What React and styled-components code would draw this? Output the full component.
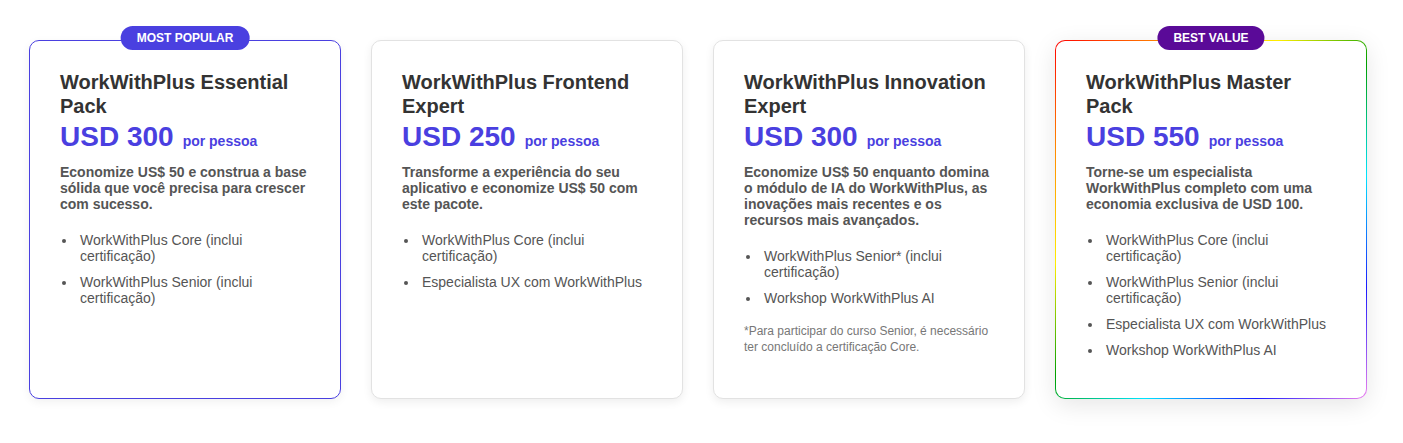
import React from "react";
import styled, { createGlobalStyle, css } from "styled-components";

const Global = createGlobalStyle`
  html, body { margin: 0; padding: 0; background: #fff; }
  body { font-family: "Liberation Sans", Arial, sans-serif; }
`;

const Row = styled.div`
  display: flex;
  align-items: stretch;
  gap: 30px;
  padding: 40px 36px 44px 29px;
`;

const Card = styled.div`
  position: relative;
  box-sizing: border-box;
  width: 312px;
  min-height: 359px;
  flex: 0 0 312px;
  border-radius: 10px;
  padding: 29px 30px 40px;
  background: #fff;
  border: 1px solid #e2e2e2;
  box-shadow: 0 3px 10px rgba(0, 0, 0, 0.07);
  ${(p) =>
    p.$variant === "popular" &&
    css`
      border-color: #4a40e0;
      box-shadow: 0 3px 10px rgba(0, 0, 0, 0.06);
    `}
  ${(p) =>
    p.$variant === "best" &&
    css`
      border: 1px solid transparent;
      background: linear-gradient(#fff, #fff) padding-box,
        linear-gradient(135deg, #ff0000, #ff8c00, #ffee00, #00a000, #00e5ff, #1a1aff, #ee82ee) border-box;
      box-shadow: 0 6px 24px rgba(0, 0, 0, 0.1);
    `}
`;

const Badge = styled.span`
  position: absolute;
  top: -15px;
  left: 50%;
  transform: translateX(-50%);
  height: 24px;
  line-height: 24px;
  padding: 0 16px;
  border-radius: 12px;
  background: ${(p) => p.$bg};
  color: #fff;
  font-size: 12px;
  font-weight: 700;
  white-space: nowrap;
  text-transform: uppercase;
`;

const Title = styled.h3`
  margin: 0;
  font-size: 20px;
  line-height: 24px;
  font-weight: 700;
  color: #333;
`;

const Price = styled.div`
  display: flex;
  align-items: baseline;
  gap: 9px;
  margin-top: 2px;
  color: #4a3fe0;
  font-weight: 700;
`;

const Amount = styled.span`
  font-size: 28px;
  line-height: 34px;
`;

const Per = styled.span`
  font-size: 14px;
`;

const Desc = styled.p`
  margin: 10px 0 0;
  font-size: 14px;
  line-height: 16px;
  font-weight: 700;
  color: #555;
`;

const List = styled.ul`
  margin: 20px 0 0;
  padding-left: 20px;
  list-style: none;
  display: flex;
  flex-direction: column;
  gap: 10px;
`;

const Item = styled.li`
  position: relative;
  font-size: 14px;
  line-height: 16px;
  color: #555;

  &::before {
    content: "";
    position: absolute;
    left: -18px;
    top: 7px;
    width: 4px;
    height: 4px;
    border-radius: 50%;
    background: #555;
  }
`;

const Note = styled.p`
  margin: 17px 0 0;
  font-size: 12px;
  line-height: 16px;
  color: #777;
`;

const plans = [
  {
    variant: "popular",
    badge: { text: "Most Popular", bg: "#4a40e0" },
    title: "WorkWithPlus Essential Pack",
    price: "USD 300",
    desc: "Economize US$ 50 e construa a base sólida que você precisa para crescer com sucesso.",
    items: ["WorkWithPlus Core (inclui certificação)", "WorkWithPlus Senior (inclui certificação)"],
  },
  {
    variant: "plain",
    title: "WorkWithPlus Frontend Expert",
    price: "USD 250",
    desc: "Transforme a experiência do seu aplicativo e economize US$ 50 com este pacote.",
    items: ["WorkWithPlus Core (inclui certificação)", "Especialista UX com WorkWithPlus"],
  },
  {
    variant: "plain",
    title: "WorkWithPlus Innovation Expert",
    price: "USD 300",
    desc: "Economize US$ 50 enquanto domina o módulo de IA do WorkWithPlus, as inovações mais recentes e os recursos mais avançados.",
    items: ["WorkWithPlus Senior* (inclui certificação)", "Workshop WorkWithPlus AI"],
    note: "*Para participar do curso Senior, é necessário ter concluído a certificação Core.",
  },
  {
    variant: "best",
    badge: { text: "Best Value", bg: "#5a0a98" },
    title: "WorkWithPlus Master Pack",
    price: "USD 550",
    desc: "Torne-se um especialista WorkWithPlus completo com uma economia exclusiva de USD 100.",
    items: [
      "WorkWithPlus Core (inclui certificação)",
      "WorkWithPlus Senior (inclui certificação)",
      "Especialista UX com WorkWithPlus",
      "Workshop WorkWithPlus AI",
    ],
  },
];

export default function App() {
  return (
    <>
      <Global />
      <Row>
        {plans.map((p) => (
          <Card key={p.title} $variant={p.variant}>
            {p.badge && <Badge $bg={p.badge.bg}>{p.badge.text}</Badge>}
            <Title>{p.title}</Title>
            <Price>
              <Amount>{p.price}</Amount>
              <Per>por pessoa</Per>
            </Price>
            <Desc>{p.desc}</Desc>
            <List>
              {p.items.map((it) => (
                <Item key={it}>{it}</Item>
              ))}
            </List>
            {p.note && <Note>{p.note}</Note>}
          </Card>
        ))}
      </Row>
    </>
  );
}
